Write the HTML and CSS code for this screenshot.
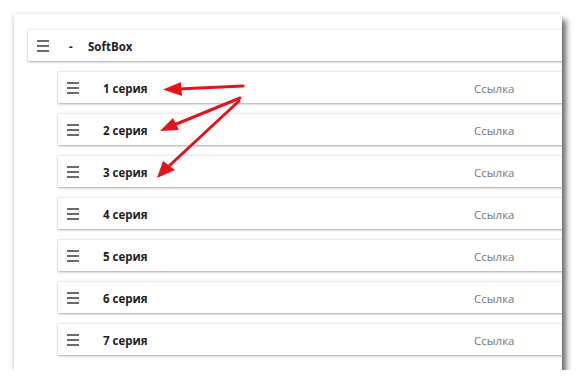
FILE: index.html
```html
<!DOCTYPE html>
<html lang="ru">
<head>
    <meta charset="UTF-8">
    <title>SoftBox</title>
    <link rel="stylesheet" href="styles.css">
</head>
<body>
    <div class="shot">
        <!-- Родительский пункт -->
        <div class="row parent">
            <span class="handle"><i></i><i></i><i></i></span>
            <span class="dash">-</span>
            <span class="title">SoftBox</span>
        </div>

        <!-- Вложенные пункты -->
        <div class="children">
            <div class="row"><span class="handle"><i></i><i></i><i></i></span><span class="title">1 серия</span><span class="link">Ссылка</span></div>
            <div class="row"><span class="handle"><i></i><i></i><i></i></span><span class="title">2 серия</span><span class="link">Ссылка</span></div>
            <div class="row"><span class="handle"><i></i><i></i><i></i></span><span class="title">3 серия</span><span class="link">Ссылка</span></div>
            <div class="row"><span class="handle"><i></i><i></i><i></i></span><span class="title">4 серия</span><span class="link">Ссылка</span></div>
            <div class="row"><span class="handle"><i></i><i></i><i></i></span><span class="title">5 серия</span><span class="link">Ссылка</span></div>
            <div class="row"><span class="handle"><i></i><i></i><i></i></span><span class="title">6 серия</span><span class="link">Ссылка</span></div>
            <div class="row"><span class="handle"><i></i><i></i><i></i></span><span class="title">7 серия</span><span class="link">Ссылка</span></div>
        </div>
    </div>

    <!-- Стрелки-пометки поверх скриншота -->
    <svg class="arrows" width="576" height="384" viewBox="0 0 576 384">
        <g stroke="#e5131b" stroke-width="3" stroke-linecap="round" fill="none">
            <line x1="243" y1="86" x2="178" y2="89"/>
            <line x1="240" y1="98" x2="174" y2="125"/>
            <line x1="239" y1="101" x2="169" y2="166"/>
        </g>
        <g fill="#e5131b">
            <polygon points="163,89.5 181,82 182,96"/>
            <polygon points="160,131 173,118 179,130"/>
            <polygon points="157,178 163,161 175,170"/>
        </g>
    </svg>
</body>
</html>
```

FILE: styles.css
```css
/* Основа страницы */
body {
    margin: 0;
    background: #ffffff;
    font-family: "Open Sans", "Noto Sans", sans-serif;
    color: #222;
}

/* Рамка скриншота с тенью */
.shot {
    margin: 14px 0 0 14px;
    width: 548px;
    height: 356px;
    box-sizing: border-box;
    padding: 15px 0 0 14px;
    background: #fff;
    overflow: hidden;
    box-shadow: 4px 6px 6px rgba(0,0,0,0.6), -1px 0 4px rgba(0,0,0,0.12);
}

/* Строка списка */
.row {
    display: flex;
    align-items: center;
    height: 32px;
    width: 600px;
    box-sizing: border-box;
    background: #fff;
    border-top: 1px solid #ececec;
    box-shadow: 0 1px 2px rgba(0,0,0,0.35);
    font-size: 11.5px;
}

.handle {
    display: flex;
    flex-direction: column;
    gap: 3px;
    width: 12px;
    margin-left: 9px;
}

.handle i {
    display: block;
    height: 2px;
    background: #6b6b6b;
}

.row .title,
.row .dash,
.row .link {
    padding-top: 2px;
}

.parent .dash {
    margin-left: 20px;
    width: 19px;
    font-weight: bold;
}

.parent .title {
    font-weight: bold;
}

.children {
    display: flex;
    flex-direction: column;
    gap: 10px;
    margin: 10px 0 0 30px;
}

.children .title {
    margin-left: 24px;
    width: 371px;
    font-weight: bold;
}

.link {
    color: #777;
}

/* Стрелки */
.arrows {
    position: absolute;
    left: 0;
    top: 0;
}
```
